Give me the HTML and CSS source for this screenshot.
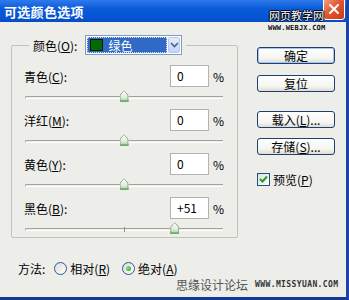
FILE: index.html
```html
<!DOCTYPE html>
<html lang="zh-CN">
<head>
    <meta charset="UTF-8">
    <title>可选颜色选项</title>
    <link rel="stylesheet" href="styles.css">
</head>
<body>
    <div class="window">
        <div class="titlebar">
            <span class="title">可选颜色选项</span>
            <div class="close">
                <svg width="20" height="20" viewBox="0 0 20 20">
                    <path d="M6 6 L14 14 M14 6 L6 14" stroke="#fff" stroke-width="2.2" stroke-linecap="round"/>
                </svg>
            </div>
            <div class="mark-top">
                <div class="mark-cn">网页教学网</div>
                <div class="mark-url">WWW.WEBJX.COM</div>
            </div>
        </div>

        <div class="content">
            <div class="left">
                <fieldset class="group">
                    <legend>
                        <span>颜色(<u>O</u>):</span>
                        <div class="select">
                            <div class="selected">
                                <span class="swatch"></span>
                                <span>绿色</span>
                            </div>
                            <div class="drop">
                                <svg width="9" height="6" viewBox="0 0 9 6">
                                    <path d="M1 1 L4.5 4.5 L8 1" fill="none" stroke="#4d6185" stroke-width="1.6"/>
                                </svg>
                            </div>
                        </div>
                    </legend>

                    <div class="field">
                        <div class="row">
                            <span class="label">青色(<u>C</u>):</span>
                            <span class="num">0</span>
                            <span class="pct">%</span>
                        </div>
                        <div class="slider">
                            <div class="track"></div>
                            <div class="tick"></div>
                            <div class="thumb" style="left: 50%"></div>
                        </div>
                    </div>

                    <div class="field">
                        <div class="row">
                            <span class="label">洋红(<u>M</u>):</span>
                            <span class="num">0</span>
                            <span class="pct">%</span>
                        </div>
                        <div class="slider">
                            <div class="track"></div>
                            <div class="tick"></div>
                            <div class="thumb" style="left: 50%"></div>
                        </div>
                    </div>

                    <div class="field">
                        <div class="row">
                            <span class="label">黄色(<u>Y</u>):</span>
                            <span class="num">0</span>
                            <span class="pct">%</span>
                        </div>
                        <div class="slider">
                            <div class="track"></div>
                            <div class="tick"></div>
                            <div class="thumb" style="left: 50%"></div>
                        </div>
                    </div>

                    <div class="field">
                        <div class="row">
                            <span class="label">黑色(<u>B</u>):</span>
                            <span class="num">+51</span>
                            <span class="pct">%</span>
                        </div>
                        <div class="slider">
                            <div class="track"></div>
                            <div class="tick"></div>
                            <div class="thumb" style="left: 75.5%"></div>
                        </div>
                    </div>
                </fieldset>

                <div class="method">
                    <span>方法:</span>
                    <span class="radio"></span>
                    <span>相对(<u>R</u>)</span>
                    <span class="radio on"></span>
                    <span>绝对(<u>A</u>)</span>
                </div>
            </div>

            <div class="side">
                <div class="btn default">确定</div>
                <div class="btn">复位</div>
                <div class="btn gap">载入(<u>L</u>)...</div>
                <div class="btn">存储(<u>S</u>)...</div>
                <div class="check">
                    <span class="box">
                        <svg width="11" height="11" viewBox="0 0 11 11">
                            <path d="M2 5 L4.5 7.5 L9 2.5" fill="none" stroke="#21a121" stroke-width="2"/>
                        </svg>
                    </span>
                    <span>预览(<u>P</u>)</span>
                </div>
            </div>
        </div>

        <div class="mark-bottom">
            <span class="mark-cn2">思缘设计论坛</span>
            <span class="mark-url2">WWW.MISSYUAN.COM</span>
        </div>
    </div>
</body>
</html>
```

FILE: styles.css
```css
body {
    margin: 0;
    font-family: "Noto Sans CJK SC", sans-serif;
    font-size: 12px;
    color: #000;
}
u { text-decoration: underline; text-underline-offset: 1px; }

.window {
    position: relative;
    width: 349px;
    height: 300px;
    box-sizing: border-box;
    background: #ededea;
    border-right: 3px solid #1b44a8;
    border-bottom: 3px solid #123a95;
    overflow: hidden;
}

.titlebar {
    position: relative;
    height: 22px;
    background: linear-gradient(#2f79ec, #0a5ad8 40%, #0653d4 85%, #0a4ac0);
    display: flex;
    align-items: center;
}
.title {
    color: #fff;
    font-weight: bold;
    font-size: 13px;
    padding-left: 4px;
    letter-spacing: 0.3px;
}
.close {
    position: absolute;
    right: 1px;
    top: -2px;
    width: 20px;
    height: 20px;
    border: 1px solid #fff;
    border-radius: 3px;
    background: linear-gradient(135deg, #f0a48a, #e4572e 45%, #cc3a18);
    display: flex;
    align-items: center;
    justify-content: center;
}
.mark-top {
    position: absolute;
    left: 268px;
    top: 9px;
    width: 57px;
    text-align: center;
}
.mark-cn {
    color: #fff;
    font-size: 11px;
    line-height: 13px;
    text-shadow: 1px 0 #000, -1px 0 #000, 0 1px #000, 0 -1px #000;
}
.mark-url {
    font-family: "DejaVu Sans Mono", monospace;
    font-weight: bold;
    font-size: 7px;
    line-height: 9px;
    letter-spacing: 0.2px;
    color: #111;
    margin-top: 2px;
}

.content {
    display: flex;
    padding: 13px 0 0 11px;
}
.left {
    width: 227px;
}

.group {
    margin: 0;
    height: 203px;
    box-sizing: border-box;
    border: 1px solid #c3c2b8;
    border-radius: 2px;
    padding: 10px 14px 0 12px;
}
.group legend {
    display: flex;
    align-items: center;
    margin-left: 5px;
    padding: 0 4px;
    height: 20px;
}
.select {
    display: flex;
    width: 97px;
    height: 20px;
    box-sizing: border-box;
    margin-left: 8px;
    border: 1px solid #7f9db9;
    background: #fff;
    padding: 1px;
}
.selected {
    flex: 1;
    display: flex;
    align-items: center;
    gap: 5px;
    background: #316ac5;
    color: #fff;
    outline: 1px dotted #d7e0f2;
    outline-offset: -1px;
    padding-left: 3px;
    margin-right: 1px;
}
.swatch {
    width: 13px;
    height: 12px;
    background: #036b03;
    border: 1px solid #111;
    box-sizing: border-box;
}
.drop {
    width: 12px;
    display: flex;
    align-items: center;
    justify-content: center;
    background: linear-gradient(#e2ebfd, #c3d4fa);
    border: 1px solid #b6c9f4;
    border-radius: 2px;
    box-sizing: border-box;
}

.field .row {
    display: flex;
    align-items: center;
    height: 22px;
}
.label {
    flex: 1;
}
.num {
    width: 39px;
    height: 22px;
    box-sizing: border-box;
    border: 1px solid #b5b4ac;
    background: #fff;
    padding-left: 6px;
    line-height: 20px;
}
.pct {
    width: 10px;
    margin-left: 4px;
}
.slider {
    position: relative;
    height: 22px;
}
.field:last-child .slider {
    height: 18px;
}
.track {
    position: absolute;
    left: 1px;
    right: 0;
    top: 9px;
    height: 1px;
    border-top: 1px solid #a4a39a;
    border-bottom: 1px solid #fff;
    border-left: 1px solid #a4a39a;
    border-radius: 2px 0 0 2px;
}
.tick {
    position: absolute;
    left: 50%;
    top: 8px;
    width: 1px;
    height: 5px;
    background: #8c8b84;
}
.thumb {
    position: absolute;
    top: 3px;
    width: 9px;
    height: 12px;
    margin-left: -4px;
    background: linear-gradient(#ffffff, #dff0dc 60%, #8fcf8a);
    clip-path: polygon(50% 0, 100% 40%, 100% 100%, 0 100%, 0 40%);
    box-shadow: inset 0 -2px #6cc066;
}
.thumb::before {
    content: "";
    position: absolute;
    inset: 0;
    background: #8a9a88;
    clip-path: polygon(50% 0, 100% 40%, 100% 100%, 0 100%, 0 40%, 1px 41%, 1px calc(100% - 1px), calc(100% - 1px) calc(100% - 1px), calc(100% - 1px) 41%, 50% 1px, 1px 41%, 0 40%);
}

.method {
    display: flex;
    align-items: center;
    margin-top: 22px;
    padding-left: 7px;
    height: 16px;
}
.radio {
    width: 11px;
    height: 11px;
    border: 1px solid #2a5b8f;
    border-radius: 50%;
    background: linear-gradient(135deg, #dcdcd6, #fff);
    margin: 0 3px 0 9px;
    position: relative;
}
.radio.on {
    margin-left: 12px;
}
.radio.on::after {
    content: "";
    position: absolute;
    left: 3px;
    top: 3px;
    width: 5px;
    height: 5px;
    border-radius: 50%;
    background: radial-gradient(circle at 35% 35%, #8fe08f, #21a121);
}

.side {
    margin-left: 19px;
    padding-top: 12px;
    display: flex;
    flex-direction: column;
}
.btn {
    width: 78px;
    height: 17px;
    box-sizing: border-box;
    border: 1px solid #1f3f6e;
    border-radius: 3px;
    background: linear-gradient(#ffffff, #f4f4f0 70%, #dcdcd3);
    text-align: center;
    line-height: 15px;
    margin-bottom: 11px;
}
.btn.default {
    box-shadow: inset 0 0 0 1px #a8c4f0;
}
.btn.gap {
    margin-top: 8px;
    margin-bottom: 10px;
}
.check {
    display: flex;
    align-items: center;
    gap: 3px;
    margin-top: 5px;
}
.box {
    width: 13px;
    height: 13px;
    box-sizing: border-box;
    border: 1px solid #1c5180;
    background: linear-gradient(135deg, #e0e0da, #fff);
    display: flex;
    align-items: center;
    justify-content: center;
}

.mark-bottom {
    position: absolute;
    left: 176px;
    top: 276px;
    display: flex;
    align-items: center;
    gap: 7px;
}
.mark-cn2 {
    font-size: 12px;
    color: #555;
}
.mark-url2 {
    font-family: "DejaVu Sans Mono", monospace;
    font-weight: bold;
    font-size: 8px;
    letter-spacing: 0.4px;
    color: #333;
}
```
